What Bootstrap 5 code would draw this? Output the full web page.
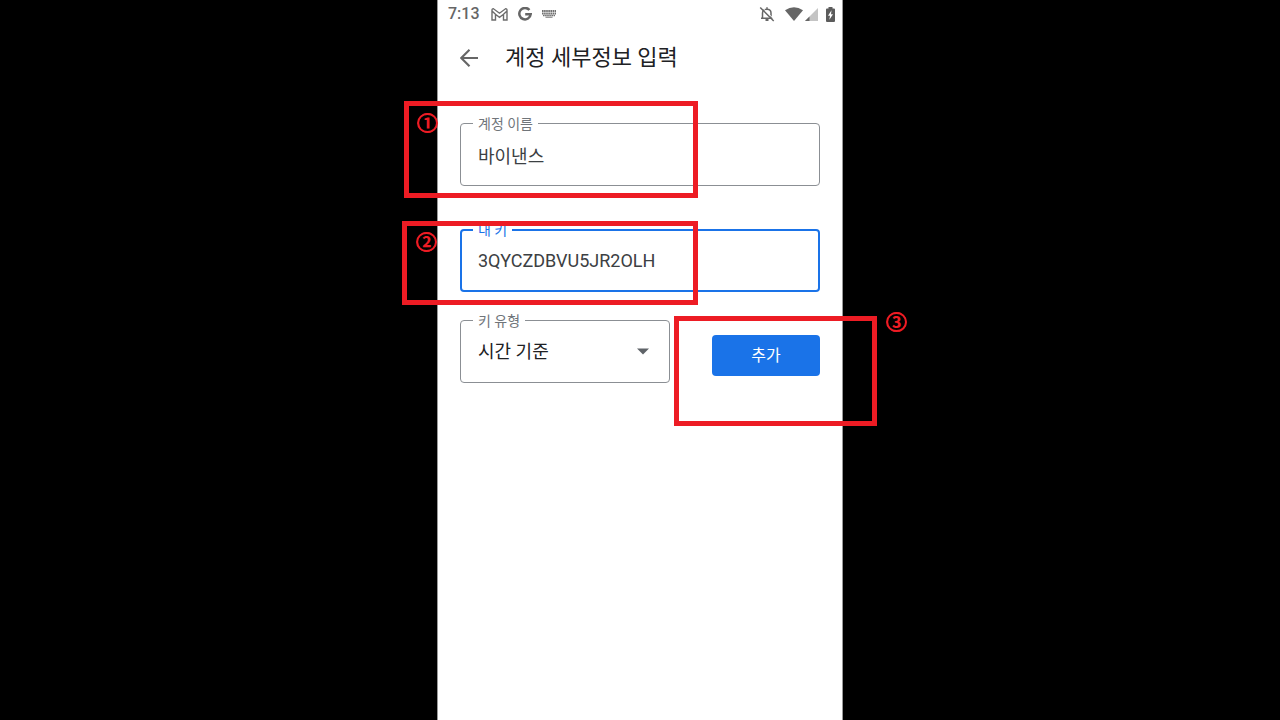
<!DOCTYPE html>
<html lang="ko">
<head>
<meta charset="utf-8">
<meta name="viewport" content="width=device-width, initial-scale=1">
<title>계정 세부정보 입력</title>
<link rel="stylesheet" href="https://cdn.jsdelivr.net/npm/bootstrap@5.3.0/dist/css/bootstrap.min.css">
<style>
  body { background: #000; font-family: Roboto, "Noto Sans CJK KR", sans-serif; color: #3c4043; }
  .phone { max-width: 406px; background: #fff; border: solid #999; border-width: 0 1px; overflow: visible; }
  .status { height: 28px; padding: 0 7px 0 10px; color: #666; font-size: 16px; line-height: 28px; font-weight: 500; }
  .status-icons, .notices { display: flex; align-items: center; }
  .notices { gap: 10px; margin-left: 11px; }
  .topbar { height: 60px; padding: 0 22px; }
  .topbar h1 { font-size: 22px; line-height: 32px; font-weight: 400; color: #202124; margin: 0 0 0 27px; }
  .back { border: 0; background: none; padding: 0; width: 18px; height: 18px; display: flex; }
  .form-area { padding: 35px 22px 0; }
  .outlined { position: relative; }
  .outlined label { position: absolute; left: 13px; top: -9px; padding: 0 5px; background: #fff; color: #70757a; font-size: 14px; line-height: 20px; }
  .outlined .form-control, .outlined .form-select { height: 63px; border: 1px solid #8b8f94; border-radius: 4px; padding: 0 17px; font-size: 18px; color: #3c4043; background: #fff; box-shadow: none; }
  .outlined .form-select { color: #202124; }
  .outlined.active .form-control { border: 2px solid #1a73e8; padding: 0 16px; }
  .outlined.active label { color: #1a73e8; }
  .caret { position: absolute; right: 21px; top: 28px; pointer-events: none; }
  .account { margin-bottom: 43px; }
  .secret { margin-bottom: 28px; }
  .kind { flex: 0 1 210px; }
  .add-wrap { position: relative; width: 108px; margin-top: 15px; }
  .btn-add { height: 41px; padding: 0; border: 0; border-radius: 4px; background: #1a73e8; color: #fff; font-size: 16px; line-height: 39px; }
  .mark-box { position: absolute; border: 5px solid #ed1c24; z-index: 2; pointer-events: none; }
  .mark-no { position: absolute; z-index: 3; display: flex; align-items: center; justify-content: center; width: 21px; height: 20px; color: #ed1c24; font: 700 20px/20px "Noto Sans CJK KR", sans-serif; }
  .mark-no::before { content: ""; position: absolute; inset: 0; border: 2px solid #ed1c24; border-radius: 50%; }
  .box-one { left: -56px; top: -22px; width: 294px; height: 97px; }
  .no-one { left: -43px; top: -10px; }
  .box-two { left: -58px; top: -8px; width: 296px; height: 84px; }
  .no-two { left: -44px; top: 3px; }
  .box-three { left: -38px; top: -19px; width: 203px; height: 110px; }
  .no-three { left: 174px; top: -23px; }
</style>
</head>
<body>
<main class="phone container-fluid p-0 min-vh-100">
  <div class="status d-flex align-items-center justify-content-between">
    <div class="d-flex align-items-center">
      <span>7:13</span>
      <div class="notices">
        <svg width="17" height="13" viewBox="0 0 17 13" fill="none" stroke="#6c6c6c" stroke-width="1.400"><path d="M1 12V2q0-1.400 1.500-1.200L8.500 5.200l6-4.400Q16 .6 16 2v10h-3.500V6.300l-4 3-4-3V12zM1 3l3.500 3.300M16 3l-3.500 3.300"/></svg>
        <svg width="14" height="14" viewBox="0 0 14 14" fill="none" stroke="#666" stroke-width="2.500"><path d="M11.400 3A5.700 5.700 0 1 0 12.700 7.200H7.200"/></svg>
        <svg width="14" height="8" viewBox="0 0 14 8" stroke="#707070" fill="none"><path d="M0 1h14M0 3.500h14" stroke-width="1.900" stroke-dasharray="1.600 .5"/><path d="M1 5.600h12" stroke-width="1.500" stroke-dasharray="1.600 .5"/><path d="M3.500 7.200h7"/></svg>
      </div>
    </div>
    <div class="status-icons">
      <svg width="16" height="16" viewBox="0 0 16 16" fill="none" stroke="#666" stroke-width="1.500"><path d="M3.500 12V7C3.500 4.800 5.200 3.200 8 3.200S12 4.800 12 7v5M2 12.200h11.500M8 1.300v2"/><path d="M6.500 14h3" stroke-width="2"/><path d="M2.500 .8l13.200 13.200" stroke="#fff" stroke-width="1"/><path d="M1.200 1.500l13.500 13.500"/></svg>
      <svg style="margin-left:10px" width="18" height="16" viewBox="1 0 18 16"><path d="M1 4.300Q10-1.800 19 4.300L10 15z" fill="#666"/></svg>
      <svg style="margin-left:2px" width="13" height="13" viewBox="0 0 13 13"><path d="M13 0v13H0z" fill="#c4c4c4"/><path d="M4.500 8.500V13H0z" fill="#666"/></svg>
      <svg class="ms-2" width="9" height="15" viewBox="0 0 9 15"><path d="M2.500 0h4v1.500H8q1 0 1 1V14q0 1-1 1H1q-1 0-1-1V2.500q0-1 1-1h1.500z" fill="#5c5c5c"/><path d="M5.500 3.200L2 8.700h2l-.6 4L7 7.200H5z" fill="#fff"/></svg>
    </div>
  </div>
  <header class="topbar d-flex align-items-center">
    <button class="back" type="button" aria-label="뒤로"><svg width="18" height="18" viewBox="0 0 18 18" fill="none" stroke="#666" stroke-width="2.100"><path d="M9.500 .8L1.300 9l8.200 8.200M1.300 9H18"/></svg></button>
    <h1>계정 세부정보 입력</h1>
  </header>
  <form class="form-area">
    <div class="outlined account">
      <input class="form-control" id="account" type="text" value="바이낸스">
      <label for="account">계정 이름</label>
      <div class="mark-box box-one"></div><span class="mark-no no-one">①</span>
    </div>
    <div class="outlined active secret">
      <input class="form-control" id="secret" type="text" value="3QYCZDBVU5JR2OLH">
      <label for="secret">내 키</label>
      <div class="mark-box box-two"></div><span class="mark-no no-two">②</span>
    </div>
    <div class="d-flex justify-content-between align-items-start">
      <div class="outlined kind">
        <select class="form-select" id="kind"><option>시간 기준</option></select>
        <label for="kind">키 유형</label>
        <svg class="caret" width="12" height="7" viewBox="0 0 12 7"><path d="M0 .5h12L6 6.500z" fill="#5f6368"/></svg>
      </div>
      <div class="add-wrap">
        <button class="btn btn-primary btn-add w-100 d-block" type="button">추가</button>
        <div class="mark-box box-three"></div><span class="mark-no no-three">③</span>
      </div>
    </div>
  </form>
</main>
<script src="https://cdn.jsdelivr.net/npm/bootstrap@5.3.0/dist/js/bootstrap.bundle.min.js"></script>
</body>
</html>
